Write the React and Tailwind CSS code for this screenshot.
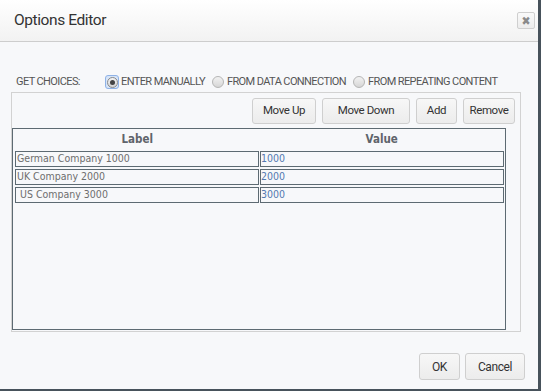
import React from "react";

const ui = { fontFamily: "Roboto, 'Noto Sans', sans-serif" };
const tbl = { fontFamily: "'DejaVu Sans Condensed', 'DejaVu Sans', Verdana, sans-serif" };

function Radio({ checked }) {
  if (checked) {
    return (
      <span className="flex h-[14px] w-[14px] items-center justify-center rounded-[3px] border border-[#8fb2e6] bg-[#d6e4f7]">
        <span className="flex h-[11px] w-[11px] items-center justify-center rounded-full border border-[#8a8a8a] bg-gradient-to-b from-[#f4f4f4] to-[#d4d4d4]">
          <span className="h-[5px] w-[5px] rounded-full bg-[#444]" />
        </span>
      </span>
    );
  }
  return (
    <span className="flex h-[14px] w-[14px] items-center justify-center">
      <span className="h-[12px] w-[12px] rounded-full border border-[#b5b5b5] bg-gradient-to-b from-[#f2f2f2] to-[#d6d6d6]" />
    </span>
  );
}

function Btn({ children, className = "" }) {
  return (
    <button
      className={
        "flex items-center justify-center rounded-[3px] border border-[#cfcfcf] bg-gradient-to-b from-[#f7f7f7] to-[#ececec] text-[11.5px] tracking-[-0.4px] text-[#333] " +
        className
      }
      style={ui}
    >
      {children}
    </button>
  );
}

const rows = [
  ["German Company 1000", "1000"],
  ["UK Company 2000", "2000"],
  ["\u00a0US Company 3000", "3000"],
];

export default function App() {
  return (
    <div className="h-[391px] w-[541px] overflow-hidden bg-[#47525b]">
      <div className="flex h-[389px] w-[538px] flex-col bg-[#f7f8fa]">
        {/* Header */}
        <div className="flex h-[42px] shrink-0 items-center justify-between border-b border-[#cdcdcd] bg-gradient-to-b from-white to-[#f2f2f2] pl-[14px] pr-[3px]">
          <span className="text-[15.5px] tracking-[-0.4px] text-[#333]" style={ui}>
            Options Editor
          </span>
          <span className="flex h-[17px] w-[18px] items-center justify-center rounded-[2px] border border-[#cfcfcf] bg-gradient-to-b from-[#fafafa] to-[#ececec] text-[12px] font-bold leading-none text-[#8a8a8a]" style={tbl}>
            ✖
          </span>
        </div>

        {/* Choices row */}
        <div className="mt-[32px] flex h-[16px] items-center pl-[16px] text-[11px] tracking-[-0.6px] text-[#555]" style={ui}>
          <span className="w-[89px]">GET CHOICES:</span>
          <Radio checked />
          <span className="ml-[2px] mr-[6px]">ENTER MANUALLY</span>
          <Radio />
          <span className="ml-[2px] mr-[6px]">FROM DATA CONNECTION</span>
          <Radio />
          <span className="ml-[2px]">FROM REPEATING CONTENT</span>
        </div>

        {/* Panel */}
        <div className="ml-[11px] mt-[2px] flex h-[240px] w-[510px] flex-col border border-[#d2d2d2]">
          <div className="flex justify-end gap-[6px] pr-[5px] pt-[5px]">
            <Btn className="h-[26px] w-[64px]">Move Up</Btn>
            <Btn className="h-[26px] w-[88px]">Move Down</Btn>
            <Btn className="h-[26px] w-[41px]">Add</Btn>
            <Btn className="h-[26px] w-[52px]">Remove</Btn>
          </div>
          <div className="mt-[4px] h-[202px] w-[494px] border border-[#5d6a72]" style={tbl}>
            <div className="grid h-[21px] grid-cols-2 items-center pl-[2px] pr-[1px] text-[11.5px] font-bold text-[#5f646b]">
              <span className="text-center">Label</span>
              <span className="text-center">Value</span>
            </div>
            <div className="mt-[1px] grid grid-cols-2 gap-x-[1px] gap-y-[2px] pl-[2px] pr-[1px]">
              {rows.map(([l, v]) => (
                <React.Fragment key={v}>
                  <div className="flex h-[16px] items-center whitespace-pre border border-[#5d6a72] pl-[1px] text-[10.5px] text-[#6e6e6e]">
                    {l}
                  </div>
                  <div className="flex h-[16px] items-center border border-[#5d6a72] text-[10.5px] text-[#5478b0]">
                    {v}
                  </div>
                </React.Fragment>
              ))}
            </div>
          </div>
        </div>

        <div className="flex-1" />

        {/* Footer */}
        <div className="flex justify-end gap-[5px] pb-[9px] pr-[13px]">
          <Btn className="h-[27px] w-[41px] text-[12px]">OK</Btn>
          <Btn className="h-[27px] w-[60px] text-[12px]">Cancel</Btn>
        </div>
      </div>
    </div>
  );
}
